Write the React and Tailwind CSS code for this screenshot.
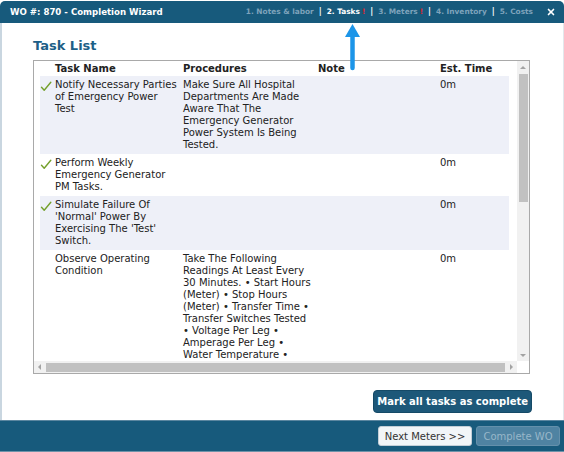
import { X } from 'lucide-react'

const tasks = [
  {
    id: 1,
    done: true,
    name: 'Notify Necessary Parties of Emergency Power Test',
    procedures:
      'Make Sure All Hospital Departments Are Made Aware That The Emergency Generator Power System Is Being Tested.',
    note: '',
    est: '0m',
  },
  {
    id: 2,
    done: true,
    name: 'Perform Weekly Emergency Generator PM Tasks.',
    procedures: '',
    note: '',
    est: '0m',
  },
  {
    id: 3,
    done: true,
    name: "Simulate Failure Of 'Normal' Power By Exercising The 'Test' Switch.",
    procedures: '',
    note: '',
    est: '0m',
  },
  {
    id: 4,
    done: false,
    name: 'Observe Operating Condition',
    procedures:
      'Take The Following Readings At Least Every 30 Minutes. • Start Hours (Meter) • Stop Hours (Meter) • Transfer Time • Transfer Switches Tested • Voltage Per Leg • Amperage Per Leg • Water Temperature • Frequency (Hz) • Oil Pressure',
    note: '',
    est: '0m',
  },
]

const steps = [
  { label: '1. Notes & labor' },
  { label: '2. Tasks', active: true, warn: true },
  { label: '3. Meters', warn: true },
  { label: '4. Inventory' },
  { label: '5. Costs' },
]

const cols = 'grid grid-cols-[15px_128px_135px_122px_1fr]'

function Tick() {
  return (
    <svg width="12" height="11" viewBox="0 0 12 11" className="mt-[1px]">
      <path d="M1.5 6.2 L4.2 9.2 L10.8 1.2" fill="none" stroke="#74a02c" strokeWidth="1.4" strokeLinecap="round" strokeLinejoin="round" />
    </svg>
  )
}

function Tri({ dir }) {
  const d = {
    up: 'M1 5 L4 2 L7 5 Z',
    down: 'M1 3 L4 6 L7 3 Z',
    left: 'M5 1 L2 4 L5 7 Z',
    right: 'M3 1 L6 4 L3 7 Z',
  }[dir]
  return (
    <svg width="8" height="8" viewBox="0 0 8 8">
      <path d={d} fill="#a3a3a3" />
    </svg>
  )
}

export default function App() {
  return (
    <div className="relative w-[564px] h-[452px] bg-white overflow-hidden flex flex-col font-['DejaVu_Sans',Verdana,sans-serif] text-[10px] text-[#222]">
      {/* title bar with wizard steps */}
      <div className="mt-[1px] h-[22px] shrink-0 rounded-t-[5px] bg-[#175a7c] flex items-center pl-[10px] pr-[8px]">
        <span className="text-white font-bold text-[8.6px]">WO #: 870 - Completion Wizard</span>
        <div className="ml-auto flex items-center text-[7.4px] font-bold">
          {steps.map((s, i) => (
            <span key={s.label} className="flex items-center">
              {i > 0 && <span className="text-white mx-[5px] text-[8px]">|</span>}
              <span className={s.active ? 'text-white' : 'text-[#7ea3bb]'}>{s.label}</span>
              {s.warn && <span className="text-[#e0242c] ml-[2px]">!</span>}
            </span>
          ))}
        </div>
        <X className="ml-[13px] text-white" size={10} strokeWidth={4} />
      </div>

      {/* body */}
      <div className="flex-1 flex flex-col border-l-2 border-l-[#c9d6e0] border-r border-r-[#e3e8ec] pl-[31px] pr-[33px]">
        <h2 className="mt-[15px] text-[13px] leading-[16px] font-bold text-[#1d5f87]">Task List</h2>

        <div className="mt-[6px] h-[314px] border border-[#a9a9a9] flex flex-col">
          <div className="flex-1 flex min-h-0">
            <div className="flex-1 overflow-hidden pl-[6px] pr-[8px] leading-[12px]">
              <div className={`${cols} h-[15px] items-center font-bold`}>
                <span />
                <span>Task Name</span>
                <span>Procedures</span>
                <span>Note</span>
                <span>Est. Time</span>
              </div>
              {tasks.map((t, i) => (
                <div key={t.id} className={`${cols} pt-[3px] pb-[3px] ${i % 2 === 0 ? 'bg-[#eef0f8]' : 'bg-white'}`}>
                  <span className="pt-[1px]">{t.done && <Tick />}</span>
                  <span className="pr-[4px]">{t.name}</span>
                  <span className="pr-[3px]">{t.procedures}</span>
                  <span>{t.note}</span>
                  <span>{t.est}</span>
                </div>
              ))}
            </div>
            {/* vertical scrollbar */}
            <div className="w-[12px] bg-[#f1f1f1] flex flex-col items-center">
              <div className="h-[13px] flex items-center justify-center">
                <Tri dir="up" />
              </div>
              <div className="w-[9px] h-[128px] bg-[#c1c1c1]" />
              <div className="flex-1" />
              <div className="h-[13px] flex items-center justify-center">
                <Tri dir="down" />
              </div>
            </div>
          </div>
          {/* horizontal scrollbar */}
          <div className="h-[12px] flex">
            <div className="flex-1 bg-[#f1f1f1] flex items-center">
              <div className="w-[12px] flex justify-center">
                <Tri dir="left" />
              </div>
              <div className="flex-1 h-[9px] bg-[#c1c1c1]" />
              <div className="w-[12px] flex justify-center">
                <Tri dir="right" />
              </div>
            </div>
            <div className="w-[12px] bg-white" />
          </div>
        </div>

        <div className="mt-[16px] flex justify-end">
          <button className="h-[23px] px-[3px] -mr-[2px] rounded-[4px] bg-[#1d5879] border border-[#154a67] text-white font-bold text-[10px]">
            Mark all tasks as complete
          </button>
        </div>
      </div>

      {/* footer */}
      <div className="h-[32px] shrink-0 bg-[#175a7c] border-t border-t-[#5b86a0] border-b border-b-[#6f93a9] flex items-center justify-end gap-[4px] pr-[4px]">
        <button className="h-[20px] w-[94px] rounded-[3px] bg-[#f1f5f8] border border-[#c3ced7] text-[#333] text-[10px]">
          Next Meters &gt;&gt;
        </button>
        <button className="h-[20px] w-[84px] rounded-[3px] bg-[#4f83a2] border border-[#6490ab] text-[#98b7c9] text-[10px]">
          Complete WO
        </button>
      </div>

      {/* pointer over the active step */}
      <svg className="absolute left-[343px] top-[23px]" width="18" height="48" viewBox="0 0 18 48">
        <path d="M9.5 12 L9.5 45" stroke="#1c95e8" strokeWidth="4.5" strokeLinecap="round" />
        <path d="M9.5 1 L17 14 L2 14 Z" fill="#1c95e8" />
      </svg>
    </div>
  )
}
